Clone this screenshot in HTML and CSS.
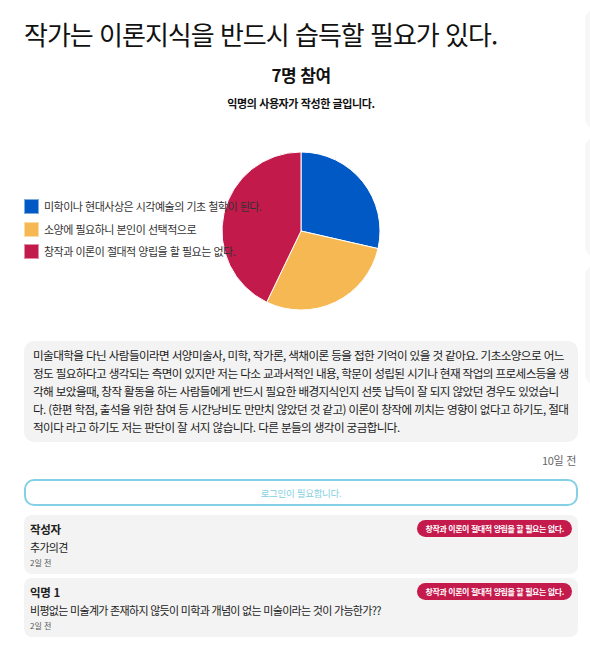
FILE: index.html
```html
<!DOCTYPE html>
<html lang="ko">
<head>
<meta charset="utf-8">
<link rel="stylesheet" href="styles.css">
</head>
<body>
<div class="page">
  <main class="main">
    <h1 class="title">작가는 이론지식을 반드시 습득할 필요가 있다.</h1>
    <div class="count">7명 참여</div>
    <div class="author-note">익명의 사용자가 작성한 글입니다.</div>
    <div class="chart">
      <svg class="pie" width="160" height="160" viewBox="0 0 160 160">
        <path d="M80 80 L80 1 A79 79 0 0 1 157.02 97.58 Z" fill="#0059c4" stroke="#fff" stroke-width="1"/>
        <path d="M80 80 L157.02 97.58 A79 79 0 0 1 45.72 151.18 Z" fill="#f6b853" stroke="#fff" stroke-width="1"/>
        <path d="M80 80 L45.72 151.18 A79 79 0 0 1 80 1 Z" fill="#c11a4b" stroke="#fff" stroke-width="1"/>
      </svg>
      <ul class="legend">
        <li><span class="sw sw-blue"></span>미학이나 현대사상은 시각예술의 기초 철학이 된다.</li>
        <li><span class="sw sw-yellow"></span>소양에 필요하니 본인이 선택적으로</li>
        <li><span class="sw sw-red"></span>창작과 이론이 절대적 양립을 할 필요는 없다.</li>
      </ul>
    </div>
    <div class="desc">미술대학을 다닌 사람들이라면 서양미술사, 미학, 작가론, 색채이론 등을 접한 기억이 있을 것 같아요. 기초소양으로 어느 정도 필요하다고 생각되는 측면이 있지만 저는 다소 교과서적인 내용, 학문이 성립된 시기나 현재 작업의 프로세스등을 생각해 보았을때, 창작 활동을 하는 사람들에게 반드시 필요한 배경지식인지 선뜻 납득이 잘 되지 않았던 경우도 있었습니다. (한편 학점, 출석을 위한 참여 등 시간낭비도 만만치 않았던 것 같고) 이론이 창작에 끼치는 영향이 없다고 하기도, 절대적이다 라고 하기도 저는 판단이 잘 서지 않습니다. 다른 분들의 생각이 궁금합니다.</div>
    <div class="ago">10일 전</div>
    <button class="login">로그인이 필요합니다.</button>
    <div class="comments">
      <div class="comment">
        <div class="c-head">
          <span class="c-name">작성자</span>
          <span class="badge">창작과 이론이 절대적 양립을 할 필요는 없다.</span>
        </div>
        <div class="c-text">추가의견</div>
        <div class="c-time">2일 전</div>
      </div>
      <div class="comment">
        <div class="c-head">
          <span class="c-name">익명 1</span>
          <span class="badge">창작과 이론이 절대적 양립을 할 필요는 없다.</span>
        </div>
        <div class="c-text">비평없는 미술계가 존재하지 않듯이 미학과 개념이 없는 미술이라는 것이 가능한가??</div>
        <div class="c-time">2일 전</div>
      </div>
    </div>
  </main>
  <aside class="side">
    <div class="side-card"></div>
    <div class="side-card"></div>
    <div class="side-card"></div>
  </aside>
</div>
</body>
</html>
```

FILE: styles.css
```css
* { box-sizing: border-box; }
html, body {
  margin: 0;
  padding: 0;
  background: #fff;
  overflow: hidden;
}
body {
  font-family: "Noto Sans CJK KR", "Noto Sans", sans-serif;
  color: #222;
  width: 590px;
  height: 652px;
}
.page {
  display: flex;
  gap: 7px;
  padding-left: 24px;
}
.main {
  width: 554px;
  flex-shrink: 0;
}
.title {
  margin: 16px 0 0;
  font-size: 26px;
  line-height: 36px;
  font-weight: 400;
  letter-spacing: -1px;
  color: #111;
  white-space: nowrap;
}
.count {
  margin-top: 11px;
  text-align: center;
  font-size: 17px;
  line-height: 24px;
  font-weight: 700;
  letter-spacing: -0.5px;
  color: #111;
}
.author-note {
  margin-top: 8px;
  text-align: center;
  font-size: 11px;
  line-height: 16px;
  font-weight: 700;
  letter-spacing: -0.4px;
  color: #111;
}
.chart {
  display: grid;
  margin-top: 40px;
  height: 180px;
}
.pie {
  grid-area: 1 / 1;
  justify-self: center;
  display: block;
}
.legend {
  grid-area: 1 / 1;
  justify-self: start;
  align-self: start;
  list-style: none;
  margin: 48px 0 0;
  padding: 0;
  display: flex;
  flex-direction: column;
  gap: 7px;
}
.legend li {
  display: flex;
  align-items: center;
  gap: 5px;
  font-size: 11px;
  line-height: 15.5px;
  letter-spacing: -0.5px;
  color: #333;
}
.sw {
  width: 15px;
  height: 15px;
  display: inline-block;
  border: 1px solid rgba(255,255,255,0.5);
}
.sw-blue { background: #0059c4; }
.sw-yellow { background: #f6b853; }
.sw-red { background: #c11a4b; }
.desc {
  margin-top: 10px;
  background: #f3f3f3;
  border-radius: 10px;
  padding: 5px 8px 6px 9px;
  font-size: 11.6px;
  line-height: 18px;
  letter-spacing: -0.6px;
  color: #1a1a1a;
  word-break: break-all;
}
.ago {
  margin-top: 10px;
  text-align: right;
  font-size: 11px;
  line-height: 16px;
  color: #666;
  padding-right: 2px;
  letter-spacing: -0.3px;
}
.login {
  display: block;
  width: 100%;
  margin-top: 11px;
  height: 27px;
  border: 2px solid #84d0e6;
  border-radius: 10px;
  background: #fff;
  color: #84cfe2;
  font-family: inherit;
  font-size: 9.5px;
  letter-spacing: -0.3px;
  padding: 0;
}
.comments {
  margin-top: 9px;
  display: flex;
  flex-direction: column;
  gap: 4px;
}
.comment {
  background: #f3f3f3;
  border-radius: 8px;
  padding: 4px 6px 6px 6px;
  height: 59px;
}
.c-head {
  display: flex;
  justify-content: space-between;
  align-items: flex-start;
}
.c-name {
  font-size: 11.5px;
  font-weight: 700;
  line-height: 18px;
  margin-top: 1px;
  letter-spacing: -0.3px;
  color: #222;
}
.badge {
  margin-top: 1px;
  background: #c41a4c;
  color: #fff;
  font-size: 8px;
  font-weight: 700;
  line-height: 17px;
  height: 17px;
  padding: 0 8px;
  border-radius: 9px;
  letter-spacing: -0.4px;
  white-space: nowrap;
}
.c-text {
  font-size: 11px;
  line-height: 18px;
  letter-spacing: -0.7px;
  color: #222;
}
.c-time {
  font-size: 8px;
  line-height: 12px;
  color: #555;
  margin-top: 1px;
}
.side {
  padding-top: 10px;
  display: flex;
  flex-direction: column;
  gap: 10px;
  width: 200px;
  flex-shrink: 0;
}
.side-card {
  height: 118px;
  background: #f7f7f7;
  border-radius: 9px;
}
```
